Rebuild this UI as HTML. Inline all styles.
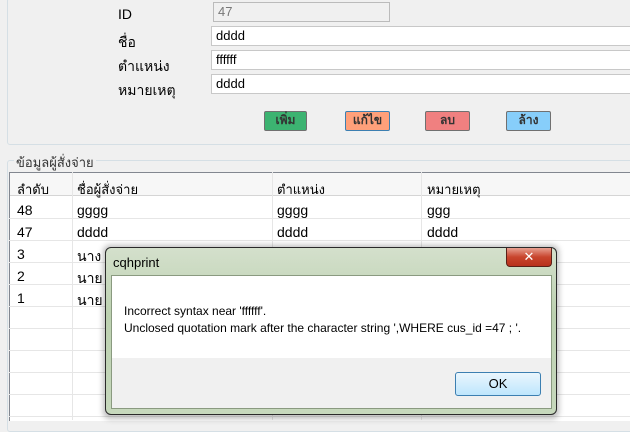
<!DOCTYPE html>
<html><head><meta charset="utf-8"><style>
body{margin:0;width:630px;height:420px;position:relative;overflow:hidden;background:#f0f0f0;font-family:"Liberation Sans","DejaVu Sans",sans-serif;font-size:13px;color:#000}
.a{position:absolute}
.lbl{left:118px;font-size:14px}
.tb{background:#fff;border:1px solid #c8c8c8;height:20px;box-sizing:border-box;padding:1px 4px;font-size:13px}
.btn{top:111px;height:20px;border:1px solid #707070;box-sizing:border-box;font-size:12px;font-weight:bold;text-align:center;line-height:17px;color:#333;border-radius:2px}
.cell{position:absolute;font-size:14px}
.hl{position:absolute;left:9px;width:621px;height:1px;background:#e6e6e6}
.vl{position:absolute;top:172px;height:248px;width:1px;background:#e6e6e6}
</style></head><body>
<div class="a lbl" style="top:6px">ID</div>
<div class="a lbl" style="top:32px">ชื่อ</div>
<div class="a lbl" style="top:56px">ตำแหน่ง</div>
<div class="a lbl" style="top:80px">หมายเหตุ</div>
<div class="a tb" style="left:213px;top:2px;width:177px;background:#f0f0f0;color:#777;border-color:#bbb">47</div>
<div class="a tb" style="left:211px;top:26px;width:430px">dddd</div>
<div class="a tb" style="left:211px;top:50px;width:430px">ffffff</div>
<div class="a tb" style="left:211px;top:74px;width:430px">dddd</div>
<div class="a btn" style="left:264px;width:43px;background:#3cb371">เพิ่ม</div>
<div class="a btn" style="left:345px;width:45px;background:#ffa07a;border-color:#3c7fb1">แก้ไข</div>
<div class="a btn" style="left:425px;width:45px;background:#f08080">ลบ</div>
<div class="a btn" style="left:506px;width:45px;background:#87cefa">ล้าง</div>
<div class="a" style="left:7px;top:-2px;width:640px;height:145px;border:1px solid #d5dfe5;border-radius:3px"></div>
<div class="a" style="left:7px;top:160px;width:640px;height:270px;border:1px solid #d5dfe5;border-radius:3px"></div>
<div class="a" style="left:14px;top:152px;background:#f0f0f0;padding:0 2px;font-size:13px;color:#333">ข้อมูลผู้สั่งจ่าย</div>
<div class="a" style="left:9px;top:172px;width:621px;height:248px;background:#fff;border-top:1px solid #828790;border-left:1px solid #828790"></div>
<div class="a" style="left:10px;top:173px;width:620px;height:22px;background:#f7f7f7;border-bottom:1px solid #d5d5d5"></div>
<div class="vl" style="left:72px"></div><div class="vl" style="left:272px"></div><div class="vl" style="left:421px"></div>
<div class="hl" style="top:218px"></div><div class="hl" style="top:240px"></div><div class="hl" style="top:262px"></div><div class="hl" style="top:284px"></div><div class="hl" style="top:306px"></div><div class="hl" style="top:328px"></div><div class="hl" style="top:350px"></div><div class="hl" style="top:372px"></div><div class="hl" style="top:394px"></div><div class="hl" style="top:416px"></div>
<div class="cell" style="left:17px;top:179px;font-size:13px">ลำดับ</div>
<div class="cell" style="left:77px;top:179px;font-size:13px">ชื่อผู้สั่งจ่าย</div>
<div class="cell" style="left:277px;top:179px;font-size:13px">ตำแหน่ง</div>
<div class="cell" style="left:427px;top:179px;font-size:13px">หมายเหตุ</div>
<div class="cell" style="left:17px;top:202px">48</div><div class="cell" style="left:77px;top:202px">gggg</div><div class="cell" style="left:277px;top:202px">gggg</div><div class="cell" style="left:427px;top:202px">ggg</div>
<div class="cell" style="left:17px;top:224px">47</div><div class="cell" style="left:77px;top:224px">dddd</div><div class="cell" style="left:277px;top:224px">dddd</div><div class="cell" style="left:427px;top:224px">dddd</div>
<div class="cell" style="left:17px;top:246px">3</div><div class="cell" style="left:77px;top:246px">นาง</div>
<div class="cell" style="left:17px;top:268px">2</div><div class="cell" style="left:77px;top:268px">นาย</div>
<div class="cell" style="left:17px;top:290px">1</div><div class="cell" style="left:77px;top:290px">นาย</div>
<!-- dialog -->
<div class="a" style="left:103px;top:245px;width:456px;height:174px;border-radius:7px;background:rgba(0,0,0,0.25);filter:blur(3px)"></div>
<div class="a" style="left:105px;top:247px;width:452px;height:168px;border:1px solid #2a2a2a;border-radius:6px;box-sizing:border-box;background:linear-gradient(#d4e0cc,#bcd1b0 40%,#c6d8bc)"></div>
<div class="a" style="left:113px;top:255px;font-size:13px;color:#000">cqhprint</div>
<div class="a" style="left:506px;top:248px;width:46px;height:19px;border:1px solid #5a2018;border-top:none;border-radius:0 0 4px 4px;box-sizing:border-box;background:linear-gradient(#e8a090,#c8452d 50%,#b8301c);color:#fff;font-weight:bold;text-align:center;font-size:13px;line-height:17px">✕</div>
<div class="a" style="left:111px;top:275px;width:441px;height:134px;border:1px solid #8a9a80;box-sizing:border-box;background:#f0f0f0"></div>
<div class="a" style="left:112px;top:276px;width:439px;height:82px;background:#fff"></div>
<div class="a" style="left:124px;top:303px;font-size:12px;line-height:17px">Incorrect syntax near 'ffffff'.<br>Unclosed quotation mark after the character string ',WHERE cus_id =47 ; '.</div>
<div class="a" style="left:455px;top:372px;width:86px;height:24px;border:1px solid #3c7fb1;border-radius:3px;box-sizing:border-box;background:linear-gradient(#eaf6fd,#bee6fd);text-align:center;line-height:22px;font-size:13px">OK</div>
</body></html>
